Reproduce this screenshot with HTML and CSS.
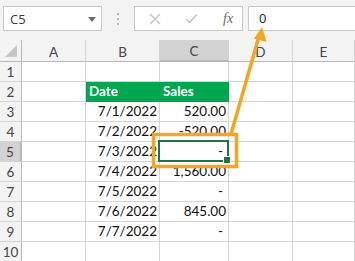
FILE: index.html
```html
<!DOCTYPE html>
<html>
<head>
<meta charset="utf-8">
<link rel="stylesheet" href="styles.css">
</head>
<body>
<div class="app">
  <div class="toolbar">
    <div class="namebox">
      <span class="name">C5</span>
      <svg class="dd" width="8" height="5" viewBox="0 0 8 5"><polygon points="0,0 8,0 4,5" fill="#6d6d6d"/></svg>
    </div>
    <div class="grip"><i></i><i></i><i></i></div>
    <div class="fxbox">
      <svg class="ic" width="12" height="12" viewBox="0 0 12 12"><path d="M1 1 L11 11 M11 1 L1 11" stroke="#c2c2c2" stroke-width="1.3" fill="none"/></svg>
      <svg class="ic" width="13" height="11" viewBox="0 0 13 11"><path d="M1 6 L4.5 9.5 L12 1.5" stroke="#c2c2c2" stroke-width="1.5" fill="none"/></svg>
      <span class="fx">fx</span>
    </div>
    <div class="formula">0</div>
  </div>
  <div class="sheet">
    <div class="hd corner"><svg width="12" height="12" viewBox="0 0 12 12"><polygon points="12,0 12,12 0,12" fill="#c6c6c6"/></svg></div>
    <div class="hd col">A</div>
    <div class="hd col">B</div>
    <div class="hd col sel-col">C</div>
    <div class="hd col">D</div>
    <div class="hd col">E</div>

    <div class="hd row">1</div><div class="c"></div><div class="c"></div><div class="c"></div><div class="c"></div><div class="c"></div>
    <div class="hd row">2</div><div class="c"></div><div class="c th">Date</div><div class="c th">Sales</div><div class="c"></div><div class="c"></div>
    <div class="hd row">3</div><div class="c"></div><div class="c num">7/1/2022</div><div class="c num">520.00</div><div class="c"></div><div class="c"></div>
    <div class="hd row">4</div><div class="c"></div><div class="c num">7/2/2022</div><div class="c num">-520.00</div><div class="c"></div><div class="c"></div>
    <div class="hd row sel-row">5</div><div class="c"></div><div class="c num">7/3/2022</div><div class="c num dash active">-</div><div class="c"></div><div class="c"></div>
    <div class="hd row">6</div><div class="c"></div><div class="c num">7/4/2022</div><div class="c num">1,560.00</div><div class="c"></div><div class="c"></div>
    <div class="hd row">7</div><div class="c"></div><div class="c num">7/5/2022</div><div class="c num dash">-</div><div class="c"></div><div class="c"></div>
    <div class="hd row">8</div><div class="c"></div><div class="c num">7/6/2022</div><div class="c num">845.00</div><div class="c"></div><div class="c"></div>
    <div class="hd row">9</div><div class="c"></div><div class="c num">7/7/2022</div><div class="c num dash">-</div><div class="c"></div><div class="c"></div>
    <div class="hd row">10</div><div class="c"></div><div class="c"></div><div class="c"></div><div class="c"></div><div class="c"></div>
  </div>
  <svg class="annot" width="355" height="261" viewBox="0 0 355 261">
    <rect x="153.5" y="134.5" width="83" height="32" fill="none" stroke="#f4a623" stroke-width="3.5"/>
    <line x1="231" y1="134" x2="258.5" y2="38" stroke="#f4a623" stroke-width="3.5"/>
    <polygon points="262,27 266.5,42 254,38.5" fill="#f4a623"/>
  </svg>
</div>
</body>
</html>
```
FILE: styles.css
```css
* { box-sizing: border-box; }
html, body { margin: 0; padding: 0; }
body {
  width: 355px;
  height: 261px;
  overflow: hidden;
  background: #ffffff;
  font-family: "Lato", "Open Sans", sans-serif;
}
.app {
  position: relative;
  width: 355px;
  height: 261px;
  overflow: hidden;
}
.toolbar {
  height: 40px;
  background: #f3f3f3;
  display: flex;
  align-items: flex-start;
  padding-top: 6px;
  padding-left: 3px;
}
.namebox, .fxbox, .formula {
  height: 25px;
  background: #ffffff;
  border: 1px solid #c9c9c9;
}
.namebox {
  width: 99px;
  display: flex;
  align-items: center;
  justify-content: space-between;
  padding: 0 5px 0 6px;
}
.name {
  font-family: "Open Sans", sans-serif;
  font-size: 13px;
  color: #3a3a3a;
}
.dd { margin-top: 1px; }
.grip {
  width: 32px;
  height: 25px;
  display: flex;
  flex-direction: column;
  align-items: center;
  justify-content: center;
  gap: 3px;
}
.grip i {
  display: block;
  width: 2px;
  height: 2px;
  background: #b5b5b5;
}
.fxbox {
  width: 109px;
  display: flex;
  align-items: center;
  padding-left: 14px;
  gap: 24px;
}
.fx {
  font-family: "Liberation Serif", serif;
  font-style: italic;
  font-size: 14px;
  color: #6b6b6b;
  margin-left: 1px;
}
.formula {
  margin-left: 5px;
  flex: 1;
  border-right: none;
  padding-left: 10px;
  font-family: "Open Sans", sans-serif;
  font-size: 13px;
  line-height: 23px;
  color: #222;
}
.sheet {
  display: grid;
  grid-template-columns: 22px 64px 74px 69px 64px 1fr;
  grid-template-rows: 22px repeat(10, 20px);
  font-family: "Lato", sans-serif;
}
.hd {
  background: #f3f3f3;
  color: #444;
  font-size: 13.5px;
  display: flex;
  align-items: center;
  justify-content: center;
  border-right: 1px solid #d4d4d4;
  border-bottom: 1px solid #d4d4d4;
}
.hd.col { border-bottom-color: #b8b8b8; padding-top: 2px; }
.hd.row { border-right-color: #b8b8b8; padding-top: 1px; }
.corner {
  align-items: flex-end;
  justify-content: flex-end;
  padding: 0 4px 4px 0;
  border-bottom-color: #b8b8b8;
  border-right-color: #b8b8b8;
}
.corner svg { display: block; }
.sel-col {
  background: #d2d2d2;
  border-bottom: 2px solid #217346;
}
.sel-row {
  background: #d2d2d2;
  border-right: 2px solid #217346;
}
.c {
  border-right: 1px solid #d4d4d4;
  border-bottom: 1px solid #d4d4d4;
  font-size: 13.5px;
  color: #111;
  padding: 0 2px;
  display: flex;
  align-items: flex-end;
  line-height: 16px;
  padding-bottom: 2px;
  white-space: nowrap;
}
.num { justify-content: flex-end; }
.dash { padding-right: 5px; }
.th {
  background: #00a650;
  color: #ffffff;
  font-weight: 700;
  border-color: #00a650;
  padding-left: 3px;
}
.active { position: relative; }
.active::after {
  content: "";
  position: absolute;
  left: -2px;
  top: -2px;
  right: -1px;
  bottom: -1px;
  border: 2px solid #217346;
}
.active::before {
  content: "";
  position: absolute;
  right: -3px;
  bottom: -3px;
  width: 6px;
  height: 6px;
  background: #217346;
  border: 1px solid #ffffff;
  z-index: 2;
}
.annot {
  position: absolute;
  left: 0;
  top: 0;
  pointer-events: none;
}
```
